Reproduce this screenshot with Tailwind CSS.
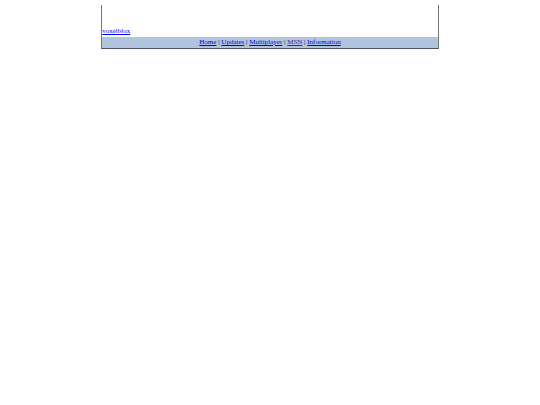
<!DOCTYPE html>
<html lang="en">
<head>
<meta charset="utf-8">
<title>voxelblox</title>
<script src="https://cdn.jsdelivr.net/npm/@tailwindcss/browser@4"></script>
</head>
<body class="bg-[#fefefe] pt-[5px] font-['Liberation_Serif',serif] text-[7px] leading-[11px] text-black">
<div class="mx-auto w-5/8 border-x border-b border-x-[#777] border-b-[#4b5563]">
<header class="flex h-8 items-end">
<a href="#" class="text-[#0000ee] underline">voxelblox</a>
</header>
<nav class="bg-[#b0c4de] text-center whitespace-nowrap">
<a href="#" class="text-[#0000ee] underline">Home</a> |
<a href="#" class="text-[#0000ee] underline">Updates</a> |
<a href="#" class="text-[#0000ee] underline">Multiplayer</a> |
<a href="#" class="text-[#551a8b] underline">MSN</a> |
<a href="#" class="text-[#0000ee] underline">Information</a>
</nav>
</div>
</body>
</html>
